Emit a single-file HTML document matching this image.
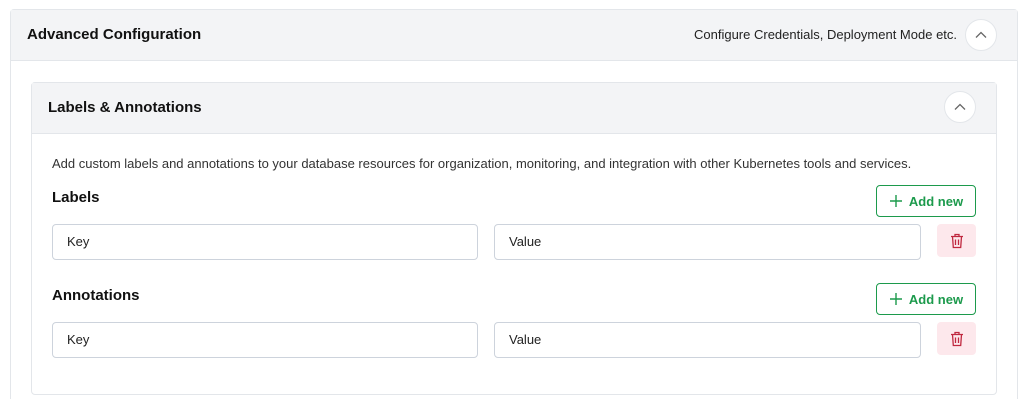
<!DOCTYPE html>
<html style="width:1025px;height:405px;overflow:hidden"><head><style>
*{box-sizing:border-box;margin:0;padding:0}
body{width:1025px;height:405px;background:#fff;font-family:"Liberation Sans",Arial,sans-serif;position:relative;overflow:hidden;color:#111}
.abs{position:absolute}
.outer{left:10px;top:9px;width:1008px;height:390px;border:1px solid #e3e6ea;border-bottom:none;border-radius:4px 4px 0 0}
.oh{left:11px;top:10px;width:1006px;height:51px;background:#f3f4f6;border-bottom:1px solid #e3e6ea}
.inner{left:31px;top:82px;width:966px;height:313px;border:1px solid #e3e6ea;border-radius:4px}
.ih{left:32px;top:83px;width:964px;height:51px;background:#f3f4f6;border-bottom:1px solid #e3e6ea}
.circ{width:32px;height:32px;border-radius:50%;background:#fff;border:1px solid #e3e6ea;display:flex;align-items:center;justify-content:center}
.t{font-weight:bold;font-size:15px}
.inp{height:36px;border:1px solid #cdd3dc;border-radius:4px;font-size:13px;padding-left:14px;line-height:34px;color:#222}
.btn{width:100px;height:32px;border:1px solid #1c9a4c;border-radius:4px;color:#1c9a4c;font-size:13px;font-weight:bold;display:flex;align-items:center;justify-content:center;gap:6px}
.del{width:39px;height:33px;background:#fde8ec;border-radius:4px;display:flex;align-items:center;justify-content:center}
</style></head><body>
<div class="abs outer"></div>
<div class="abs oh"></div>
<div class="abs t" style="left:27px;top:26px">Advanced Configuration</div>
<div class="abs" style="left:694px;top:27px;font-size:13px;color:#222">Configure Credentials, Deployment Mode etc.</div>
<div class="abs circ" style="left:965px;top:19px"><svg width="12" height="8" viewBox="0 0 12 8"><path d="M1 6.5L6 1.5L11 6.5" fill="none" stroke="#666" stroke-width="1.3"/></svg></div>
<div class="abs inner"></div>
<div class="abs ih"></div>
<div class="abs t" style="left:48px;top:99px">Labels &amp; Annotations</div>
<div class="abs circ" style="left:944px;top:91px"><svg width="12" height="8" viewBox="0 0 12 8"><path d="M1 6.5L6 1.5L11 6.5" fill="none" stroke="#666" stroke-width="1.3"/></svg></div>
<div class="abs" style="left:52px;top:156px;font-size:13px;color:#333">Add custom labels and annotations to your database resources for organization, monitoring, and integration with other Kubernetes tools and services.</div>

<div class="abs t" style="left:52px;top:189px">Labels</div>
<div class="abs btn" style="left:876px;top:185px"><svg width="14" height="14"><path d="M7 1V13M1 7H13" stroke="#1c9a4c" stroke-width="1.4"/></svg>Add new</div>
<div class="abs inp" style="left:52px;top:224px;width:426px">Key</div>
<div class="abs inp" style="left:494px;top:224px;width:427px">Value</div>
<div class="abs del" style="left:937px;top:224px"><svg width="14" height="16" viewBox="0 0 14 16"><path d="M1 3.5H13M5 3.5V1.5H9V3.5M2.5 3.5L3.3 14.5H10.7L11.5 3.5M5.5 6.5V12M8.5 6.5V12" fill="none" stroke="#c0283f" stroke-width="1.3"/></svg></div>

<div class="abs t" style="left:52px;top:287px">Annotations</div>
<div class="abs btn" style="left:876px;top:283px"><svg width="14" height="14"><path d="M7 1V13M1 7H13" stroke="#1c9a4c" stroke-width="1.4"/></svg>Add new</div>
<div class="abs inp" style="left:52px;top:322px;width:426px">Key</div>
<div class="abs inp" style="left:494px;top:322px;width:427px">Value</div>
<div class="abs del" style="left:937px;top:322px"><svg width="14" height="16" viewBox="0 0 14 16"><path d="M1 3.5H13M5 3.5V1.5H9V3.5M2.5 3.5L3.3 14.5H10.7L11.5 3.5M5.5 6.5V12M8.5 6.5V12" fill="none" stroke="#c0283f" stroke-width="1.3"/></svg></div>
</body></html>
